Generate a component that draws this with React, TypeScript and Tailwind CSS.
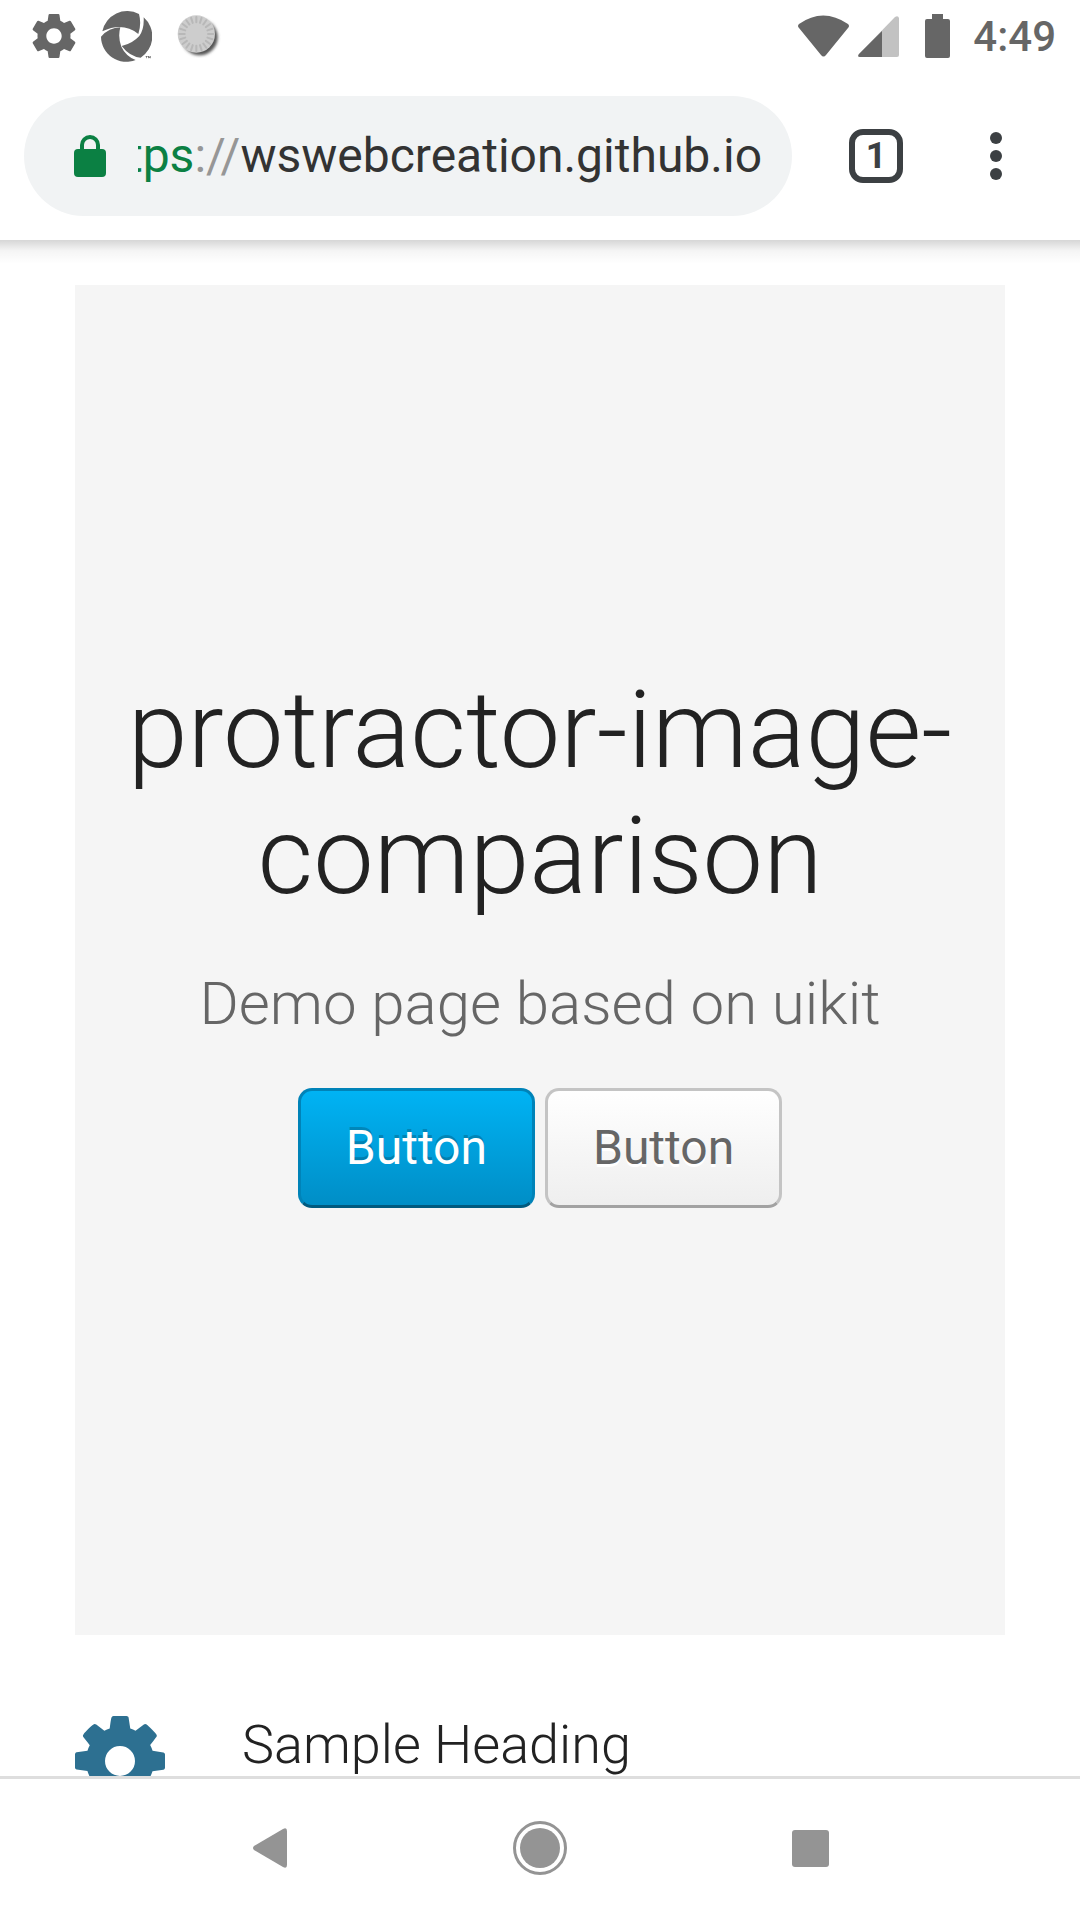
import React from "react";

const SPINNER_TICKS = Array.from({ length: 20 }, (_, i) => i * 18);

function SettingsIcon() {
  return (
    <svg viewBox="2 2 20 20" className="size-11" fill="currentColor" aria-hidden="true">
      <path d="M19.43 12.98c.04-.32.07-.64.07-.98s-.03-.66-.07-.98l2.11-1.65c.19-.15.24-.42.12-.64l-2-3.46c-.12-.22-.39-.3-.61-.22l-2.49 1c-.52-.4-1.08-.73-1.69-.98l-.38-2.65C14.46 2.18 14.25 2 14 2h-4c-.25 0-.46.18-.49.42l-.38 2.65c-.61.25-1.17.59-1.69.98l-2.49-1c-.23-.09-.49 0-.61.22l-2 3.46c-.13.22-.07.49.12.64l2.11 1.65c-.04.32-.07.65-.07.98s.03.66.07.98l-2.11 1.65c-.19.15-.24.42-.12.64l2 3.46c.12.22.39.3.61.22l2.49-1c.52.4 1.08.73 1.69.98l.38 2.65c.03.24.24.42.49.42h4c.25 0 .46-.18.49-.42l.38-2.65c.61-.25 1.17-.59 1.69-.98l2.49 1c.23.09.49 0 .61-.22l2-3.46c.12-.22.07-.49-.12-.64l-2.11-1.65zM12 15.5c-1.93 0-3.5-1.57-3.5-3.5s1.57-3.5 3.5-3.5 3.5 1.57 3.5 3.5-1.57 3.5-3.5 3.5z" />
    </svg>
  );
}

function ApertureIcon() {
  return (
    <svg viewBox="0 0 153 153" className="size-[51px]" fill="currentColor" aria-hidden="true">
      <path d="M4 61A76 76 0 0 1 114 9Q122 38 112 69Q66 32 4 61Z" />
      <path d="M128 19A76 76 0 0 1 119 140Q86 137 62 105Q94 98 115 75Q130 54 128 19Z" />
      <path d="M0 77Q24 50 58 49Q50 78 61 107Q74 135 104 147A76 76 0 0 1 0 77Z" />
      <path d="M134 135h6v2h-2v5h-2v-5h-2zM141 135h2l2 3 2-3h2v7h-2v-3l-2 3-2-3v3h-2z" />
    </svg>
  );
}

function DiscIcon() {
  return (
    <svg viewBox="0 0 132 132" className="size-11" aria-hidden="true">
      <defs>
        <filter id="disc-blur" x="-20%" y="-20%" width="140%" height="140%">
          <feGaussianBlur stdDeviation="4" />
        </filter>
      </defs>
      <circle cx="68" cy="70" r="54" fill="#555" filter="url(#disc-blur)" />
      <circle cx="58" cy="60" r="56" fill="#cdcdcd" />
      {SPINNER_TICKS.map((angle) => (
        <path
          key={angle}
          d="M58 9v16"
          stroke="#b8b8b8"
          strokeWidth="6"
          strokeLinecap="round"
          transform={`rotate(${angle} 58 60)`}
        />
      ))}
    </svg>
  );
}

function StatusBar() {
  return (
    <div className="flex h-[72px] shrink-0 items-center justify-between pr-6 pl-8 text-[#666]">
      <div className="flex items-center gap-[25px]">
        <SettingsIcon />
        <ApertureIcon />
        <DiscIcon />
      </div>
      <div className="flex items-center">
        <svg viewBox="0 0 51 42" className="mr-[9px] h-[42px] w-[51px]" fill="currentColor" aria-hidden="true">
          <path d="M1 9Q25 -8 50 9Q52 11 50 13L28 40Q25.500 43 23 40L1 13Q-1 11 1 9Z" />
        </svg>
        <svg viewBox="0 0 41 41" className="mr-[26px] size-[41px]" fill="currentColor" aria-hidden="true">
          <path d="M1 38L37 1Q40 -1 41 2V39Q41 41 39 41H2Q-1 41 1 38Z" opacity="0.4" />
          <path d="M1 38L24 15V41H2Q-1 41 1 38Z" />
        </svg>
        <svg viewBox="0 0 25 44" className="mr-[23px] h-11 w-[25px]" fill="currentColor" aria-hidden="true">
          <path d="M7 0H18V5H23Q25 5 25 7V42Q25 44 23 44H2Q0 44 0 42V7Q0 5 2 5H7Z" />
        </svg>
        <time className="pt-0.5 text-[42px] leading-none font-medium">4:49</time>
      </div>
    </div>
  );
}

function AddressBar() {
  return (
    <div className="flex h-[168px] shrink-0 items-center px-6">
      <div className="flex h-[120px] min-w-0 flex-1 items-center rounded-full bg-[#f1f3f4] pr-[30px] pl-[50px]">
        <svg viewBox="0 0 32 42" className="mr-8 h-[42px] w-8 shrink-0" aria-hidden="true">
          <path d="M8 16V10a8 8 0 0 1 16 0v6" fill="none" stroke="#0b8043" strokeWidth="4" />
          <rect y="14" width="32" height="28" rx="4" fill="#0b8043" />
        </svg>
        <div
          role="textbox"
          aria-label="Address"
          tabIndex={0}
          className="flex min-w-0 flex-1 justify-end overflow-hidden text-[48px] leading-[60px] whitespace-nowrap"
        >
          <span className="text-[#0b8043]">https</span>
          <span className="text-[#969696]">://</span>
          <span className="text-[#333]">wswebcreation.github.io</span>
        </div>
      </div>
      <button
        type="button"
        aria-label="Tabs"
        className="mr-[87px] ml-[57px] flex size-[54px] items-center justify-center rounded-[14px] border-6 border-[#3c4043] text-[36px] leading-none font-bold text-[#3c4043]"
      >
        1
      </button>
      <button type="button" aria-label="Menu" className="mr-[54px] flex flex-col gap-1.5">
        <span className="size-3 rounded-full bg-[#3c4043]" />
        <span className="size-3 rounded-full bg-[#3c4043]" />
        <span className="size-3 rounded-full bg-[#3c4043]" />
      </button>
    </div>
  );
}

function CogIcon() {
  return (
    <svg viewBox="128 128 1536 1536" className="size-[90px] shrink-0" fill="#2d7091" aria-hidden="true">
      <path d="M1152 896q0-106-75-181t-181-75-181 75-75 181 75 181 181 75 181-75 75-181zm512-109v222q0 12-8 23t-20 13l-185 28q-19 54-39 91 35 50 107 138 10 12 10 25t-9 23q-27 37-99 108t-94 71q-12 0-26-9l-138-108q-44 23-91 38-16 136-29 186-7 28-36 28h-222q-14 0-24.500-8.500t-11.500-21.500l-28-184q-49-16-90-37l-141 107q-10 9-25 9-14 0-25-11-126-114-165-168-7-10-7-23 0-12 8-23 15-21 51-66.500t54-70.500q-27-50-41-99l-183-27q-13-2-21-12.500t-8-23.500v-222q0-12 8-23t19-13l186-28q14-46 39-92-40-57-107-138-10-12-10-24 0-10 9-23 26-36 98.500-107.500t94.500-71.500q13 0 26 10l138 107q44-23 91-38 16-136 29-186 7-28 36-28h222q14 0 24.500 8.500t11.500 21.500l28 184q49 16 90 37l142-107q9-9 24-9 13 0 25 10 129 119 165 170 7 8 7 22 0 12-8 23-15 21-51 66.500t-54 70.500q26 50 41 98l183 28q13 2 21 12.500t8 23.500z" />
    </svg>
  );
}

function SystemNav() {
  return (
    <nav className="grid h-36 shrink-0 grid-cols-3 items-center justify-items-center border-t-3 border-[#dedede] bg-white px-[12.5%] pb-[3px] text-[#949494]">
      <button type="button" aria-label="Back">
        <svg viewBox="0 0 34 40" className="h-10 w-[34px]" fill="currentColor" aria-hidden="true">
          <path d="M1 18L30 1Q34 -1 34 3V37Q34 41 30 39L1 22Q-1 20 1 18Z" />
        </svg>
      </button>
      <button type="button" aria-label="Home">
        <svg viewBox="0 0 54 54" className="size-[54px]" aria-hidden="true">
          <circle cx="27" cy="27" r="25.500" fill="none" stroke="currentColor" strokeWidth="3" />
          <circle cx="27" cy="27" r="20" fill="currentColor" />
        </svg>
      </button>
      <button type="button" aria-label="Overview">
        <span className="block size-[37px] rounded-[3px] bg-current" />
      </button>
    </nav>
  );
}

export default function App() {
  return (
    <div className="flex h-screen flex-col overflow-hidden bg-white font-['Roboto',sans-serif]">
      <header className="relative z-10 bg-white">
        <StatusBar />
        <AddressBar />
        <div className="absolute inset-x-0 top-full h-6 bg-linear-to-b from-black/16 via-black/4 via-45% to-transparent" />
      </header>

      <main className="min-h-0 flex-1 overflow-hidden px-[75px] pt-[45px]">
        <section className="flex min-h-[1350px] flex-col items-center justify-center bg-[#f5f5f5] px-[45px] pb-[45px] text-center">
          <h1 className="text-[108px] leading-[126px] font-light text-[#222]">
            protractor-image-comparison
          </h1>
          <p className="mt-[45px] text-[60px] leading-[79px] font-light text-[#666]">
            Demo page based on uikit
          </p>
          <div className="mt-[45px] flex gap-2.5">
            <button
              type="button"
              className="h-[120px] rounded-[14px] border-3 border-[#0083b8] border-b-[#005a7f] bg-linear-to-b from-[#00b4f5] to-[#008dc5] bg-origin-border px-[45px] text-[48px] text-white [text-shadow:0_-3px_0_rgba(0,0,0,0.2)]"
            >
              Button
            </button>
            <button
              type="button"
              className="h-[120px] rounded-[14px] border-3 border-[#c4c4c4] border-b-[#a2a2a2] bg-linear-to-b from-white to-[#eee] bg-origin-border px-[45px] text-[48px] text-[#666] [text-shadow:0_3px_0_#fff]"
            >
              Button
            </button>
          </div>
        </section>

        <article className="mt-[81px] flex gap-[77px]">
          <CogIcon />
          <h2 className="text-[54px] leading-[57px] font-light text-[#222]">Sample Heading</h2>
        </article>
      </main>

      <SystemNav />
    </div>
  );
}
